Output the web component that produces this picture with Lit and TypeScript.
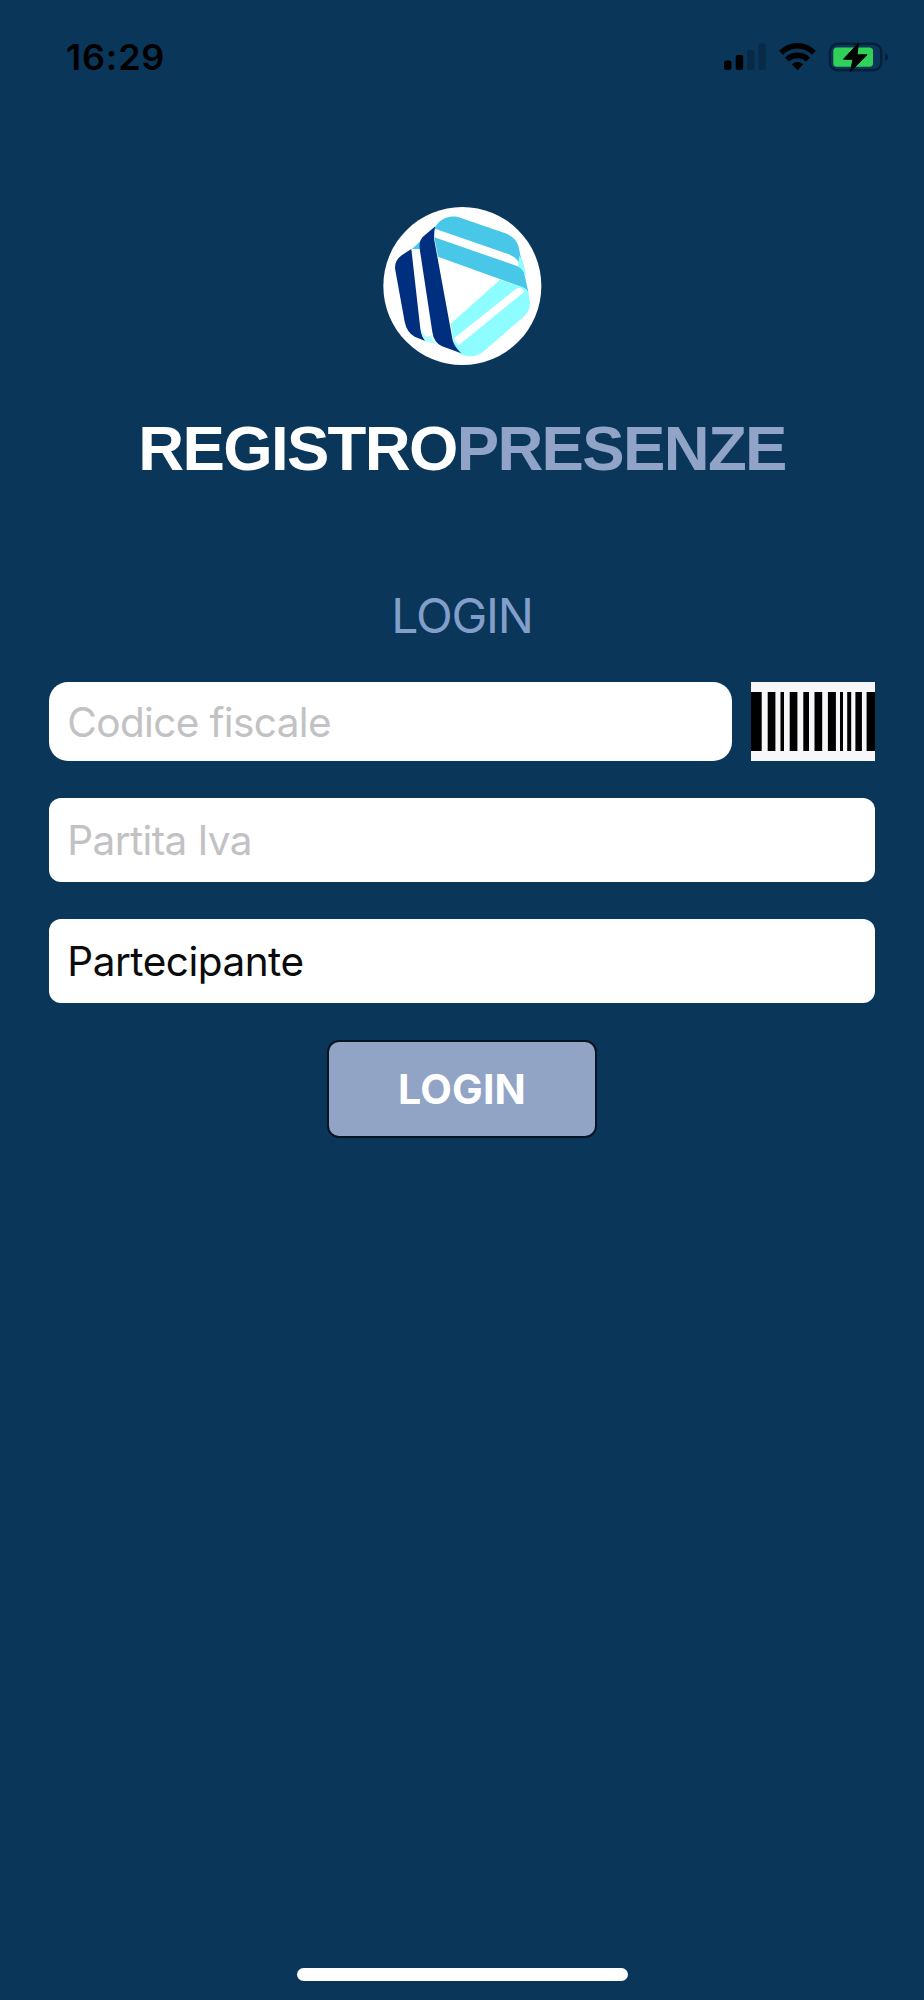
import { LitElement, html, css, svg } from 'lit';
import { customElement } from 'lit/decorators.js';

@customElement('status-bar')
class StatusBar extends LitElement {
  static styles = css`
    :host { display: flex; justify-content: space-between; align-items: center; height: 114px; padding: 0 35px 0 66px; box-sizing: border-box; }
    .time { font: 600 36px/40px Inter, sans-serif; letter-spacing: 0.8px; color: #000; }
    .icons { display: block; width: 165px; height: 30px; }
  `;
  render() {
    return html`
      <span class="time">16:29</span>
      <svg class="icons" viewBox="724 42 165 30">
        <g fill="#000">
          <rect x="724" y="60.5" width="7.5" height="9.5" rx="2" />
          <rect x="735.7" y="55" width="7.5" height="15" rx="2" />
          <g opacity=".2">
            <rect x="747" y="50" width="7.5" height="20" rx="2" />
            <rect x="758.5" y="43.5" width="7.5" height="26.5" rx="2" />
          </g>
        </g>
        <g fill="none" stroke="#000" stroke-width="5.6">
          <path d="M781 52.8C790.500 43.300 804.500 43.300 814 52.8" />
          <path d="M787 59.600C792.500 54 802.500 54 808 59.600" />
        </g>
        <path d="M791.8 64.2Q797.500 59.600 803.200 64.2L797.500 70.200Z" fill="#000" />
        <rect x="829.800" y="43.800" width="51.500" height="26.500" rx="8" fill="none" stroke="#05203a" stroke-width="2.400" />
        <path d="M885 53V61Q888.200 59.800 888.200 57T885 53Z" fill="#05203a" />
        <rect x="833.300" y="47.500" width="39.700" height="19.200" rx="3.500" fill="#30d158" />
        <path d="M858.500 43L843.500 59.200H853L850.500 71.500L867 54.800H857Z" fill="#000" stroke="#000" stroke-width="1" stroke-linejoin="round" />
      </svg>
    `;
  }
}

@customElement('brand-logo')
class BrandLogo extends LitElement {
  static styles = css`
    :host { display: block; width: 160px; height: 160px; }
    svg { display: block; width: 160px; height: 160px; }
  `;
  render() {
    return html`
      <svg viewBox="30 29 480 480">
        <circle cx="271" cy="269" r="237" fill="#fff" />
        <path d="M120 158L148 132L143 158Z" fill="#48c7e8" />
        <path d="M188 96C200 73 222 56 258 62L400 111Q433 123 440 152L450 200Q458 240 470 290C463 275 453 273 430 265L198 181L187 123Z" fill="#48c7e8" />
        <path d="M189 97L410 174Q440 186 449 216Q436 208 418 203L187 123Z" fill="#fff" />
        <path d="M442 178L453 196L463 240Q453 220 438 208Z" fill="#8dfdff" />
        <path d="M384 250L430 265Q463 273 470 292L474 320Q474 346 452 364L337 463Q315 483 284 479Q264 475 248 460L236 382Z" fill="#8dfdff" />
        <path d="M246 426L432 278Q449 270 457 286L260 447Q250 440 246 426Z" fill="#fff" />
        <path d="M118 158L89 177Q65 195 70 222L98 376Q104 407 128 421L160 434Q148 419 145 397Z" fill="#002f80" />
        <path d="M190 90L160 115Q140 128 143 157L181 407Q185 438 210 450L268 471Q248 453 242 432L187 132Q184 110 190 90Z" fill="#002f80" />
        <path d="M147 400Q149 425 163 436L192 443Q181 432 178 416Q169 423 163 422Z" fill="#8dfdff" opacity=".65" />
      </svg>
    `;
  }
}

const bars = [[0, 10.700], [16.700, 7.700], [29.500, 3.500], [38.700, 7.700], [52.300, 5.700], [63.500, 7.700], [76.900, 8], [89, 3], [96.200, 4], [104.400, 6.500], [115.600, 8.400]];

@customElement('app-root')
class AppRoot extends LitElement {
  static styles = css`
    :host { display: flex; flex-direction: column; width: 924px; height: 2000px; box-sizing: border-box; background: #0a365a; font-family: Inter, sans-serif; overflow: hidden; }
    .main { display: flex; flex-direction: column; align-items: center; padding: 92px 49px 0; flex: 1; }
    .title { margin: 44px 0 0; font: 700 63.500px/76px "Liberation Sans", sans-serif; white-space: nowrap; color: #fff; letter-spacing: -1.650px; }
    .accent { color: #91a4c8; }
    .subtitle { margin: 100px 0 0; font-weight: 400; font-size: 48px; line-height: 60px; letter-spacing: -1.200px; color: #829fca; }
    .form { display: flex; flex-direction: column; width: 825.400px; margin-top: 36.300px; }
    .row { display: flex; justify-content: space-between; height: 79px; margin-bottom: 36.700px; }
    .field { display: flex; align-items: center; box-sizing: border-box; height: 84px; margin-bottom: 36.700px; padding: 2px 18px 0; border-radius: 12px; background: #fff; color: #c2c2c4; font-size: 40.500px; letter-spacing: -0.630px; }
    .rounded { width: 682.700px; height: 79px; margin: 0; border-radius: 19px; }
    .filled { color: #0b0b0b; letter-spacing: -0.500px; }
    .barcode { display: block; width: 124px; height: 79px; }
    .button { align-self: center; box-sizing: border-box; width: 270px; height: 98px; margin-top: 0.600px; border: 2.500px solid #071522; border-radius: 12px; background: #91a4c6; color: #fff; font: 700 41px/94px Inter, sans-serif; letter-spacing: 0.200px; padding: 0; }
    .home { align-self: center; width: 331px; height: 13px; margin-bottom: 19.500px; border-radius: 7px; background: #fff; }
  `;
  render() {
    return html`
      <status-bar></status-bar>
      <div class="main">
        <brand-logo></brand-logo>
        <h1 class="title">REGISTRO<span class="accent">PRESENZE</span></h1>
        <h2 class="subtitle">LOGIN</h2>
        <div class="form">
          <div class="row">
            <div class="field rounded">Codice fiscale</div>
            <svg class="barcode" viewBox="0 0 124 79">
              <rect width="124" height="79" fill="#f7f6f8" />
              ${bars.map(([x, w]) => svg`<rect x=${x} y="10" width=${w} height="59" fill="#000" />`)}
            </svg>
          </div>
          <div class="field">Partita Iva</div>
          <div class="field filled">Partecipante</div>
          <button class="button">LOGIN</button>
        </div>
      </div>
      <div class="home"></div>
    `;
  }
}
